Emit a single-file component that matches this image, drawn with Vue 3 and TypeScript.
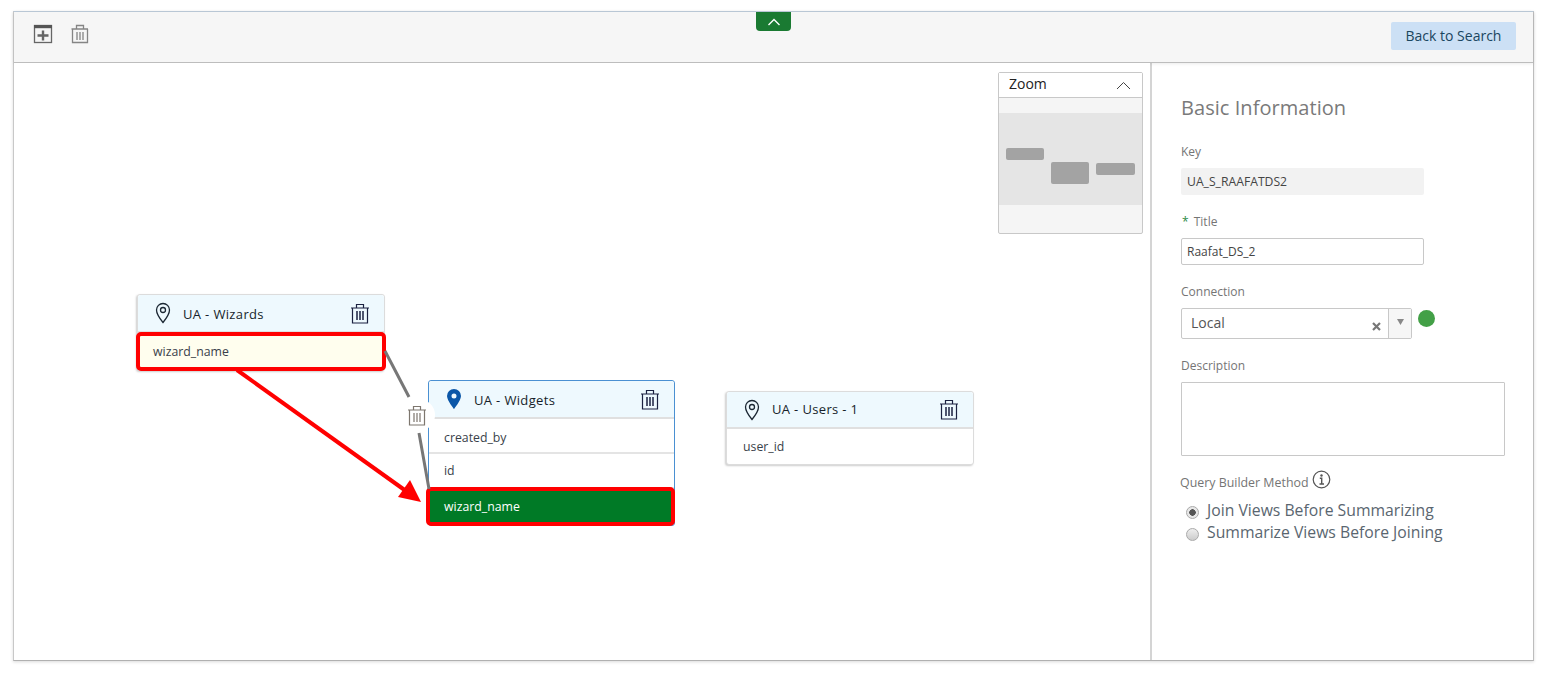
<script setup lang="ts">
interface NodeRow { label: string; kind?: 'source' | 'target' }
interface DiagramNode {
  title: string
  x: number
  y: number
  active?: boolean
  headH: number
  rows: NodeRow[]
}
const nodes: DiagramNode[] = [
  { title: 'UA - Wizards', x: 123, y: 231, headH: 38, rows: [{ label: 'wizard_name', kind: 'source' }] },
  { title: 'UA - Widgets', x: 414, y: 317, active: true, headH: 38, rows: [{ label: 'created_by' }, { label: 'id' }, { label: 'wizard_name', kind: 'target' }] },
  { title: 'UA - Users - 1', x: 712, y: 328, headH: 37, rows: [{ label: 'user_id' }] },
]
const minimap = [
  { x: 7, y: 35, w: 38, h: 12 },
  { x: 52, y: 49, w: 38, h: 22 },
  { x: 97, y: 50, w: 39, h: 12 },
]
</script>

<template>
  <div class="page">
    <div class="frame">
      <header class="toolbar">
        <div class="tools">
          <svg width="20" height="20" viewBox="0 0 20 20">
            <rect x="1.500" y="1.500" width="17" height="17" fill="none" stroke="#666" stroke-width="1.300" />
            <rect x="1" y="1" width="18" height="3.200" fill="#555" />
            <path d="M10 6.500v10M4.500 11.500h11" stroke="#666" stroke-width="2.400" fill="none" />
          </svg>
          <svg width="20" height="20" viewBox="0 0 20 20">
            <g fill="none" stroke="#858585" stroke-width="1.300">
              <path d="M1.500 5h16.500M2.500 5v13.500h15V5M6.500 5V1.500h7V5M7 8v8M10 8v8M13 8v8" />
            </g>
          </svg>
        </div>
        <button class="collapse" type="button" aria-label="Collapse">
          <svg width="14" height="8" viewBox="0 0 14 8"><path d="M1.500 7 7 1.500 12.500 7" fill="none" stroke="#fff" stroke-width="1.400" /></svg>
        </button>
        <button class="back" type="button">Back to Search</button>
      </header>

      <div class="main">
        <section class="canvas">
          <svg class="links" width="1137" height="597" viewBox="0 0 1137 597">
            <path d="M371 288 395 334M405 370 415 426" fill="none" stroke="#777" stroke-width="3" />
            <path d="M223 307 392 428" fill="none" stroke="#f00" stroke-width="4" />
            <path d="M407 439 384 434 396 417Z" fill="#f00" />
          </svg>

          <article
            v-for="n in nodes"
            :key="n.title"
            class="node"
            :class="{ active: n.active, short: n.headH < 38 }"
            :style="{ left: n.x + 'px', top: n.y + 'px' }"
          >
            <div class="node-head" :style="{ height: n.headH + 'px' }">
              <svg class="pin" width="18" height="22" viewBox="0 0 18 22">
                <path v-if="n.active" fill-rule="evenodd" d="M9 1a7 7 0 0 0-7 7c0 4.500 7 13 7 13s7-8.500 7-13a7 7 0 0 0-7-7Zm0 4.500a2.500 2.500 0 1 1 0 5 2.500 2.500 0 0 1 0-5Z" fill="#0b57a8" />
                <g v-else fill="none" stroke="#1b2733" stroke-width="1.300">
                  <path d="M9 20.500S2.500 12.500 2.500 8a6.500 6.500 0 0 1 13 0c0 4.500-6.500 12.500-6.500 12.500Z" />
                  <circle cx="9" cy="8" r="2.500" />
                </g>
              </svg>
              <span class="node-title">{{ n.title }}</span>
              <svg class="trash" width="20" height="21" viewBox="0 0 20 21">
                <g fill="none" stroke="#1b2140" stroke-width="1.200">
                  <path d="M1 5h18M2.500 5v15h15V5M6.500 5V1.500h7V5" />
                </g>
                <path d="M7 8v9M10 8v9M13 8v9" stroke="#1b2140" stroke-width="1.500" />
              </svg>
            </div>
            <div
              v-for="r in n.rows"
              :key="r.label"
              class="node-row"
              :class="r.kind"
            >{{ r.label }}</div>
          </article>

          <div class="link-trash">
            <svg width="20" height="21" viewBox="0 0 20 21">
              <g fill="none" stroke="#7d766e" stroke-width="1.200">
                <path d="M1 5h18M2.500 5v15h15V5M6.500 5V1.500h7V5M7 8v9M10 8v9M13 8v9" />
              </g>
            </svg>
          </div>

          <aside class="zoom">
            <div class="zoom-head">
              <span>Zoom</span>
              <svg width="15" height="9" viewBox="0 0 15 9"><path d="M1 8 7.500 1.500 14 8" fill="none" stroke="#444" stroke-width="1" /></svg>
            </div>
            <div class="zoom-body">
              <div class="zoom-band">
                <i
                  v-for="(m, i) in minimap"
                  :key="i"
                  :style="{ left: m.x + 'px', top: m.y + 'px', width: m.w + 'px', height: m.h + 'px' }"
                ></i>
              </div>
            </div>
          </aside>
        </section>

        <section class="panel">
          <h2>Basic Information</h2>

          <label class="lbl lbl-key">Key</label>
          <div class="ro">UA_S_RAAFATDS2</div>

          <label class="lbl lbl-title"><span class="req">*</span> Title</label>
          <div class="inp">Raafat_DS_2</div>

          <label class="lbl lbl-conn">Connection</label>
          <div class="conn-row">
            <div class="select">
              <span class="sel-val">Local</span>
              <svg class="sel-x" width="9" height="9" viewBox="0 0 9 9"><path d="M1 1l7 7M8 1 1 8" stroke="#777" stroke-width="2.200" /></svg>
              <span class="sel-btn"><svg width="7" height="6" viewBox="0 0 7 6"><path d="M0 0h7L3.500 6Z" fill="#888" /></svg></span>
            </div>
            <span class="dot"></span>
          </div>

          <label class="lbl lbl-desc">Description</label>
          <div class="area"></div>

          <div class="qbm">
            <span>Query Builder Method</span>
            <svg width="19" height="19" viewBox="0 0 19 19">
              <circle cx="9.500" cy="9.500" r="8.300" fill="none" stroke="#555" stroke-width="1.200" />
              <circle cx="9.500" cy="5.500" r="1.200" fill="#555" />
              <path d="M7.800 8.300h1.900v5.500M7.500 14h4.500" fill="none" stroke="#555" stroke-width="1.400" />
            </svg>
          </div>
          <div class="radio"><span class="rd on"></span>Join Views Before Summarizing</div>
          <div class="radio"><span class="rd"></span>Summarize Views Before Joining</div>
        </section>
      </div>
    </div>
  </div>
</template>

<style scoped>
.page {
  width: 1551px;
  height: 676px;
  padding: 11px 0 0 13px;
  box-sizing: border-box;
  background: #fff;
  font-family: "Open Sans", "Liberation Sans", sans-serif;
  overflow: hidden;
}
.frame {
  width: 1521px;
  height: 650px;
  box-sizing: border-box;
  border-top: 1px solid #bccad8;
  border-left: 1px solid #c8c8c8;
  border-right: 1px solid #bdbdbd;
  border-bottom: 1px solid #b0b0b0;
  box-shadow: 0 1px 3px rgba(0, 0, 0, .15);
  display: flex;
  flex-direction: column;
}
.toolbar {
  position: relative;
  height: 51px;
  flex: none;
  box-sizing: border-box;
  background: #f6f6f6;
  border-bottom: 1px solid #bdbdbd;
  box-shadow: 0 1px 3px rgba(0, 0, 0, .08);
  display: flex;
  align-items: flex-start;
  justify-content: space-between;
  padding: 12px 17px 0 19px;
}
.tools { display: flex; gap: 17px; }
.collapse {
  position: absolute;
  left: 742px;
  top: 0;
  width: 35px;
  height: 19px;
  padding: 0;
  border: 0;
  border-radius: 0 0 4px 4px;
  background: #1a7a32;
  display: flex;
  align-items: center;
  justify-content: center;
}
.back {
  width: 125px;
  height: 28px;
  margin-top: -2px;
  padding: 0 0 2px;
  border: 0;
  border-radius: 2px;
  background: #cce0f5;
  color: #1a4660;
  font: 14px "Open Sans", sans-serif;
}
.main { flex: 1; display: flex; min-height: 0; }
.canvas { position: relative; flex: 1; background: #fff; }
.links { position: absolute; left: 0; top: 0; z-index: 2; pointer-events: none; }
.node {
  position: absolute;
  width: 248px;
  box-sizing: border-box;
  border: 1px solid #dcdcdc;
  border-radius: 3px;
  background: #fff;
  box-shadow: -1px 1px 2px rgba(0, 0, 0, .2);
  z-index: 1;
}
.node.active { width: 247px; border-color: #4a90d2; box-shadow: none; }
.node-head {
  box-sizing: border-box;
  display: flex;
  align-items: center;
  padding: 0 14px 0 16px;
  background: #eef9fe;
  border-bottom: 2px solid #e0e0e0;
  border-radius: 3px 3px 0 0;
}
.node-title {
  margin-left: 11px;
  padding-top: 2px;
  flex: 1;
  font-size: 13px;
  font-weight: 500;
  letter-spacing: .35px;
  color: #161f2a;
}
.node.short .node-title { padding-top: 0; padding-bottom: 2px; }
.node-row {
  height: 35px;
  box-sizing: border-box;
  display: flex;
  align-items: center;
  padding-left: 15px;
  font-size: 12.300px;
  color: #3a3f4a;
  border-bottom: 2px solid #e4e4e4;
}
.node.short .node-row { padding-left: 16px; }
.node-row:last-child { border-bottom: 0; }
.node.active .node-row:nth-child(2) { padding-top: 3px; }
.node-row.source, .node-row.target {
  position: relative;
  z-index: 3;
  height: 39px;
  margin: -1px -2px;
  border: 4px solid #f00;
  border-radius: 5px;
  padding-left: 13px;
}
.node-row.source { background: #fffeee; }
.node-row.target {
  margin: -2px -1px -1px -3px;
  padding-left: 14px;
  background: #007a26;
  color: #fff;
}
.link-trash {
  position: absolute;
  left: 389px;
  top: 336px;
  width: 32px;
  height: 32px;
  border-radius: 50%;
  background: #fff;
  z-index: 2;
  display: flex;
  align-items: center;
  justify-content: center;
  padding-right: 4px;
  box-sizing: border-box;
}
.zoom {
  position: absolute;
  left: 984px;
  top: 9px;
  width: 145px;
  height: 162px;
  box-sizing: border-box;
  border: 1px solid #c8c8c8;
  border-radius: 2px;
  background: #f5f5f5;
  z-index: 3;
}
.zoom-head {
  height: 25px;
  box-sizing: border-box;
  background: #fff;
  border-bottom: 1px solid #c8c8c8;
  display: flex;
  align-items: center;
  justify-content: space-between;
  padding: 0 11px 3px 10px;
  font-size: 14px;
  color: #222;
}
.zoom-head svg { margin-top: 3px; }
.zoom-body { padding-top: 15px; }
.zoom-band { position: relative; height: 92px; background: #e5e5e5; }
.zoom-band i {
  position: absolute;
  background: #a3a3a3;
  border-radius: 2px;
}
.panel {
  width: 383px;
  flex: none;
  box-sizing: border-box;
  background: #fff;
  border-left: 2px solid #d4d4d4;
  padding: 30px 0 0 29px;
  color: #666;
}
h2 {
  margin: 0;
  font-size: 20px;
  letter-spacing: .05px;
  line-height: 30px;
  font-weight: 400;
  color: #7a7a7a;
}
.lbl { display: block; font-size: 12px; line-height: 16px; color: #757575; }
.lbl-key { margin-top: 21px; }
.ro {
  margin-top: 8px;
  width: 243px;
  height: 27px;
  line-height: 27px;
  padding-left: 6px;
  box-sizing: border-box;
  background: #f2f2f2;
  border-radius: 2px;
  font-size: 12.200px;
  color: #444;
}
.lbl-title { margin-top: 19px; }
.req { color: #2e8b47; margin: 0 2px 0 1px; }
.inp {
  margin-top: 8px;
  width: 243px;
  height: 27px;
  line-height: 25px;
  padding-left: 5px;
  box-sizing: border-box;
  border: 1px solid #c8c8c8;
  border-radius: 2px;
  font-size: 12px;
  color: #444;
}
.lbl-conn { margin-top: 19px; }
.conn-row { margin-top: 8px; display: flex; align-items: flex-start; gap: 6px; }
.select {
  width: 231px;
  height: 31px;
  box-sizing: border-box;
  border: 1px solid #c8c8c8;
  border-radius: 2px;
  display: flex;
  align-items: center;
}
.sel-val { flex: 1; padding: 0 0 2px 9px; font-size: 14px; color: #555; }
.sel-x { margin: 5px 7px 0 0; }
.sel-btn {
  width: 23px;
  height: 29px;
  background: #f6f6f6;
  border-left: 1px solid #c8c8c8;
  display: flex;
  align-items: center;
  justify-content: center;
  padding-bottom: 3px;
  box-sizing: border-box;
}
.dot { width: 17px; height: 17px; margin-top: 2px; border-radius: 50%; background: #43a047; }
.lbl-desc { margin-top: 19px; }
.area {
  margin-top: 8px;
  width: 324px;
  height: 74px;
  box-sizing: border-box;
  border: 1px solid #c8c8c8;
  border-radius: 1px;
}
.qbm {
  margin-top: 13px;
  height: 20px;
  display: flex;
  align-items: center;
  gap: 3px;
  font-size: 12.400px;
  color: #757575;
}
.qbm span { margin-top: 6px; margin-left: -1px; }
.qbm svg { margin-top: 0; }
.radio {
  display: flex;
  align-items: center;
  height: 22px;
  margin-left: 5px;
  font-size: 15.750px;
  color: #5a6670;
}
.qbm + .radio { margin-top: 10px; }
.rd {
  width: 13px;
  height: 13px;
  margin: 4px 8px 0 0;
  box-sizing: border-box;
  border: 1px solid #aaa;
  border-radius: 50%;
  background: linear-gradient(#eee, #ccc);
}
.rd.on { background: radial-gradient(circle, #555 0 3px, #e8e8e8 3.500px); }
</style>
